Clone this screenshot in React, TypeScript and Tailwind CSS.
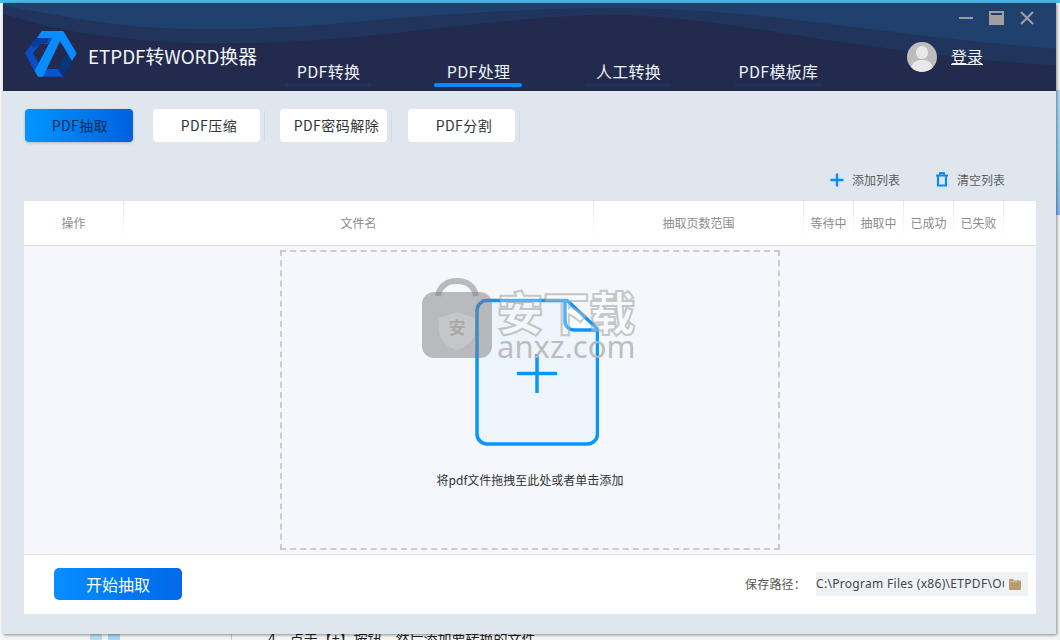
const navItems = [
  { label: "PDF转换", active: false },
  { label: "PDF处理", active: true },
  { label: "人工转换", active: false },
  { label: "PDF模板库", active: false },
];

const tabs = [
  { label: "PDF抽取", active: true },
  { label: "PDF压缩", active: false },
  { label: "PDF密码解除", active: false },
  { label: "PDF分割", active: false },
];

const columns = [
  { label: "操作", width: "w-[99px]" },
  { label: "文件名", width: "w-[469px]" },
  { label: "抽取页数范围", width: "w-[209px]" },
  { label: "等待中", width: "w-[49px]" },
  { label: "抽取中", width: "w-[49px]" },
  { label: "已成功", width: "w-[49px]" },
  { label: "已失败", width: "w-[49px]" },
];

function Logo() {
  return (
    <svg width="52" height="46" viewBox="0 0 52 46" className="shrink-0">
      <polygon points="11,7 27,7 23,13 15,13 8,22.5 14,33 10,41 0,22.3" fill="#0650c4" />
      <polygon points="11,7 24,7 22,12 15,13 9,17 6,14" fill="#053c9c" />
      <polygon points="18,38 33,38 38,45.7 14,45.7" fill="#0655cc" />
      <polygon points="40,24 46.5,31 38.3,45.7 33,38" fill="#05357f" />
      <polygon points="16.7,0 38.3,0 51.7,22.3 47,30 35,10 18,45.7 13,45.7 9.5,40 27,7 12,7" fill="#0a8cff" />
    </svg>
  );
}

function HeaderWaves() {
  return (
    <svg
      className="absolute inset-0 h-full w-full"
      viewBox="0 0 1053 88"
      preserveAspectRatio="none"
    >
      <path d="M0 0H1053V62C1000 60 930 52 860 42C780 32 680 10 590 12C500 15 400 32 300 38C230 42 170 42 100 33C60 28 30 20 0 11Z" fill="#20345c" />
      <path d="M0 0H1053V46C1010 42 960 38 900 30C800 18 720 6 620 5C520 5 430 12 340 20C280 26 200 28 140 24C80 18 40 10 0 2Z" fill="#20406e" />
    </svg>
  );
}

function FileIcon() {
  return (
    <svg width="124" height="150" viewBox="0 0 124 150" className="shrink-0 ml-[14px]">
      <path
        d="M12 2.5H92L122.5 31V136a10 10 0 0 1-10 10H12a10 10 0 0 1-10-10V12.5a10 10 0 0 1 10-10Z"
        fill="#edf4fb"
        stroke="#0a96ff"
        strokeWidth="3.5"
      />
      <path d="M90 3L122 32H99a9 9 0 0 1-9-9Z" fill="#ffffff" />
      <path d="M90 2V23a9 9 0 0 0 9 9H122" fill="none" stroke="#0a96ff" strokeWidth="3.5" />
      <path d="M92 2.5L122.5 31" fill="none" stroke="#0a96ff" strokeWidth="3" />
      <path d="M62 56V95M42 75.5H82" fill="none" stroke="#0a96ff" strokeWidth="3.5" />
    </svg>
  );
}

function Watermark() {
  return (
    <div className="absolute left-[422px] top-[278px] flex items-start gap-[5px] pointer-events-none">
      <div className="relative w-[70px] h-[80px] shrink-0">
        <svg width="70" height="80" viewBox="0 0 70 80" className="absolute inset-0">
          <path d="M16 18C18 7 26 3 35 3C44 3 52 7 54 18" fill="none" stroke="rgba(125,125,125,0.5)" strokeWidth="6" />
          <rect x="0" y="14" width="70" height="66" rx="12" fill="rgba(125,125,125,0.5)" />
          <path d="M35 34L53 40V53C53 62 44 69 35 72C26 69 17 62 17 53V40Z" fill="rgba(255,255,255,0.18)" />
        </svg>
        <span className="absolute left-0 right-0 top-[37px] text-center text-[17px] leading-[24px] font-bold text-[#a9a9a9]">
          安
        </span>
      </div>
      <div className="flex flex-col items-center pt-[9px]">
        <span className="text-[46px] leading-[46px] font-black text-[rgba(255,255,255,0.3)] [-webkit-text-stroke:2px_rgba(165,165,165,0.6)] whitespace-nowrap">
          安下载
        </span>
        <span className="text-[31px] leading-[26px] text-[#b8b8b8] font-['Noto_Sans',sans-serif] whitespace-nowrap opacity-90">
          anxz.com
        </span>
      </div>
    </div>
  );
}

export default function App() {
  return (
    <div className="relative w-[1060px] h-[640px] overflow-hidden bg-[#f4f5f5] font-['Noto_Sans_CJK_SC','Noto_Sans',sans-serif]">
      {/* what shows behind the window */}
      <div className="absolute inset-x-0 top-0 h-[3px] bg-[#4ab8e8]" />
      <div className="absolute right-0 top-[90px] w-[4px] h-[125px] bg-gradient-to-b from-[#b9d9f5] via-[#8fdcf2] to-[#8cb4f0]" />
      <div className="absolute left-[90px] top-[634px] w-[12px] h-[6px] bg-[#b8dff2]" />
      <div className="absolute left-[108px] top-[634px] w-[12px] h-[6px] bg-[#a8d8f0]" />
      <div className="absolute left-[231px] top-[634px] w-px h-[6px] bg-[#c4ccd4]" />
      <div className="absolute left-[268px] top-[628px] text-[14px] leading-[20px] text-[#222] whitespace-nowrap">
        4、点击【+】按钮，然后添加要转换的文件
      </div>

      <div className="relative ml-[3px] mt-[3px] w-[1053px] h-[631px] flex flex-col bg-[#dfe6ed] shadow-[1px_1px_3px_rgba(0,0,0,0.45)]">
        <header className="relative h-[88px] shrink-0 bg-[#222a4d] overflow-hidden">
          <HeaderWaves />
          <div className="relative flex h-full">
            <div className="flex items-start gap-[11px] pl-[22px] pt-[28px] w-[281px] shrink-0">
              <Logo />
              <span className="text-[18.8px] leading-[26px] mt-[12px] text-[#f2f4f8] whitespace-nowrap">
                ETPDF转WORD换器
              </span>
            </div>
            <nav className="flex gap-[62px] h-full">
              {navItems.map((item) => (
                <div key={item.label} className="w-[88px] flex flex-col items-center pt-[56px]">
                  <span className="pl-[1px] text-[16px] leading-[24px] tracking-[0.3px] text-[#eef1f6] whitespace-nowrap">{item.label}</span>
                  <span
                    className={
                      item.active
                        ? "w-[88px] h-[4px] rounded-full bg-[#0a8cff]"
                        : "w-[88px] h-[4px] rounded-full bg-[#213257]"
                    }
                  />
                </div>
              ))}
            </nav>
            <div className="flex-1 relative">
              <div className="flex items-center gap-[14px] ml-[85px] mt-[39px]">
                <div className="relative w-[30px] h-[30px] rounded-full bg-[#bdbdbd] overflow-hidden shrink-0">
                  <div className="absolute left-[9px] top-[4px] w-[12px] h-[13px] rounded-full bg-[#e8e8e8]" />
                  <div className="absolute left-[4px] top-[18px] w-[22px] h-[12px] rounded-t-[9px] bg-[#e8e8e8]" />
                </div>
                <span className="text-[16px] leading-[24px] -mt-[2px] text-[#eef1f6] underline underline-offset-1">登录</span>
              </div>
              <div className="absolute right-[22px] top-[8px] flex items-center gap-[16px]">
                <div className="w-[14px] h-[2px] bg-[#9a9a9a]" />
                <div className="w-[15px] h-[14px] flex flex-col pt-[2px] px-[2px] bg-[#a0a0a0]">
                  <div className="h-[2px] bg-[#1f3f6e]" />
                </div>
                <svg width="14" height="14" viewBox="0 0 14 14">
                  <path d="M1 1L13 13M13 1L1 13" stroke="#a0a0a0" strokeWidth="2" />
                </svg>
              </div>
            </div>
          </div>
        </header>

        <main className="flex-1 flex flex-col pl-[21px] pr-[20px]">
          <div className="flex pt-[18px] pl-[1px] gap-[20.5px]">
            {tabs.map((tab) => (
              <div key={tab.label} className="flex items-center gap-[4px]">
                <div
                  className={
                    tab.active
                      ? "w-[108px] h-[33px] flex items-center justify-center pl-[2px] rounded-[4px] text-[14px] tracking-[0.5px] text-[#0c2a55] bg-gradient-to-r from-[#0096ff] to-[#0060e0] shadow-[0_1px_3px_rgba(0,0,0,0.2)]"
                      : "w-[107px] h-[33px] flex items-center justify-center pl-[6px] rounded-[4px] text-[14px] tracking-[0.5px] text-[#333] bg-white whitespace-nowrap"
                  }
                >
                  {tab.label}
                </div>
                {!tab.active ? (
                  <div className="w-px h-[31px] mt-[2px] -mr-[5px] bg-[#d2d9e0]" />
                ) : (
                  <div className="w-px -mr-[6px]" />
                )}
              </div>
            ))}
          </div>

          <div className="flex justify-end items-center h-[59px] pt-[16px] pr-[31px] text-[12px] text-[#5f5f5f]">
            <svg width="14" height="14" viewBox="0 0 14 14">
              <path d="M7 0.5V13.5M0.5 7H13.5" fill="none" stroke="#0a8cff" strokeWidth="2.4" />
            </svg>
            <span className="ml-[8px]">添加列表</span>
            <svg width="14" height="15" viewBox="0 0 14 15" className="ml-[35px]">
              <path d="M1 3.5H13M5 3V1H9V3" fill="none" stroke="#0a8cff" strokeWidth="1.8" />
              <path d="M3 3.5V13.5H11V3.5" fill="none" stroke="#0a8cff" strokeWidth="2.2" />
            </svg>
            <span className="ml-[8px]">清空列表</span>
          </div>

          <div className="w-[1012px] h-[413px] flex flex-col bg-white">
            <div className="flex h-[45px] shrink-0 border-b border-[#d9dcdf]">
              {columns.map((col) => (
                <div key={col.label} className="flex">
                  <div
                    className={`${col.width} flex items-center justify-center text-[12px] text-[#8c8c8c] whitespace-nowrap`}
                  >
                    {col.label}
                  </div>
                  <div className="w-px h-[40px] bg-gradient-to-b from-[#e8e8e8] to-white" />
                </div>
              ))}
            </div>

            <div className="h-[309px] shrink-0 flex justify-center pt-[4px] bg-[#f5f7fc] border-b border-[#e4e7ee]">
              <div className="w-[500px] h-[300px] flex flex-col items-center pt-[46px] border-2 border-dashed border-[#cccccc]">
                <FileIcon />
                <span className="mt-[23px] text-[12px] leading-[18px] text-[#333] whitespace-nowrap">
                  将pdf文件拖拽至此处或者单击添加
                </span>
              </div>
            </div>

            <div className="flex-1 flex items-center pb-[2px] pl-[30px] pr-[8px]">
              <div className="w-[128px] h-[32px] flex items-center justify-center rounded-[5px] text-[16px] text-white bg-gradient-to-r from-[#0a8eff] to-[#0068ea]">
                开始抽取
              </div>
              <span className="ml-auto text-[12px] tracking-[0.2px] text-[#555]">保存路径：</span>
              <div className="ml-[10px] w-[212px] h-[24px] flex items-center bg-[#eef2f6]">
                <span className="w-[188px] overflow-hidden whitespace-nowrap text-[12px] tracking-[0.3px] text-[#444] font-['Noto_Sans',sans-serif]">
                  C:\Program Files (x86)\ETPDF\Output
                </span>
                <svg width="12" height="12" viewBox="0 0 12 12" className="ml-[5px]">
                  <path d="M0 2a1 1 0 0 1 1-1h3l1 1.4h6a1 1 0 0 1 1 1V11a1 1 0 0 1-1 1H1a1 1 0 0 1-1-1Z" fill="#b89b6f" />
                  <path d="M1 3.2H8V4.2H1Z" fill="#d9c8a8" />
                </svg>
              </div>
            </div>
          </div>
        </main>
      </div>

      <Watermark />
    </div>
  );
}
